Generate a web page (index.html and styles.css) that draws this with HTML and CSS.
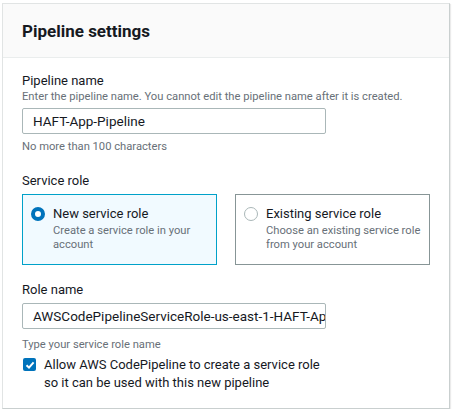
FILE: index.html
```html
<!DOCTYPE html>
<html>
<head>
<meta charset="utf-8">
<link rel="stylesheet" href="styles.css">
</head>
<body>
<div class="panel">
  <div class="panel-header"><h2 class="title">Pipeline settings</h2></div>
  <div class="panel-body">
    <div class="field">
      <div class="label">Pipeline name</div>
      <div class="desc">Enter the pipeline name. You cannot edit the pipeline name after it is created.</div>
      <div class="input">HAFT-App-Pipeline</div>
      <div class="hint">No more than 100 characters</div>
    </div>
    <div class="field service">
      <div class="label">Service role</div>
      <div class="tiles">
        <div class="tile selected">
          <span class="radio on"></span>
          <div class="tile-text">
            <div class="tile-title">New service role</div>
            <div class="tile-desc">Create a service role in your account</div>
          </div>
        </div>
        <div class="tile">
          <span class="radio"></span>
          <div class="tile-text">
            <div class="tile-title">Existing service role</div>
            <div class="tile-desc">Choose an existing service role from your account</div>
          </div>
        </div>
      </div>
    </div>
    <div class="field role">
      <div class="label">Role name</div>
      <div class="input clip">AWSCodePipelineServiceRole-us-east-1-HAFT-App-Pipeline</div>
      <div class="hint role-hint">Type your service role name</div>
      <div class="check-row">
        <span class="checkbox"><svg width="12" height="12" viewBox="0 0 12 12"><path d="M2.5 6.2 L5 8.6 L9.6 3.4" fill="none" stroke="#fff" stroke-width="2"/></svg></span>
        <span class="check-text">Allow AWS CodePipeline to create a service role so it can be used with this new pipeline</span>
      </div>
    </div>
  </div>
</div>
</body>
</html>
```
FILE: styles.css
```css
* { box-sizing: border-box; }
html, body { margin: 0; padding: 0; background: #fff; }
body {
  padding: 3px 2px 0 2px;
  font-family: Roboto, "Noto Sans", sans-serif;
  color: #16191f;
}
.panel {
  width: 448px;
  height: 406px;
  border: 1px solid #e1e4e4;
  border-right-color: #c9cfcf;
  border-bottom-color: #c9cfcf;
  box-shadow: 1px 1px 1px rgba(0,0,0,0.08);
  background: #fff;
}
.panel-header {
  height: 54px;
  background: #fafafa;
  border-bottom: 1px solid #eaeded;
  padding: 0 19px;
  display: flex;
  align-items: center;
}
.title {
  margin: 0;
  font-size: 17px;
  font-weight: 700;
}
.panel-body {
  padding: 14px 19px 0 19px;
}
.label {
  font-size: 13px;
  line-height: 18px;
}
.desc, .hint {
  font-size: 11.2px;
  line-height: 14px;
  color: #687078;
}
.input {
  width: 304px;
  height: 26px;
  border: 1px solid #aab7b8;
  border-radius: 2px;
  margin-top: 4px;
  padding: 0 10px;
  font-size: 13.5px;
  line-height: 24px;
  white-space: nowrap;
  overflow: hidden;
}
.hint { margin-top: 6px; }
.role-hint { margin-top: 9px; }
.service { margin-top: 18px; }
.tiles {
  display: flex;
  gap: 18px;
  margin-top: 4px;
}
.tile {
  width: 196px;
  height: 71px;
  border: 1px solid #879596;
  padding: 10px 4px 10px 8px;
  display: flex;
  gap: 8px;
}
.tile.selected {
  background: #f1faff;
  border-color: #00a1c9;
}
.radio {
  flex: none;
  width: 14px;
  height: 14px;
  border-radius: 50%;
  border: 1px solid #aab7b8;
  margin-top: 2px;
  background: #fff;
}
.radio.on {
  border: 4px solid #0073bb;
}
.tile-title {
  font-size: 13px;
  line-height: 18px;
}
.tile-desc {
  font-size: 11.2px;
  line-height: 14px;
  color: #687078;
  margin-top: 1px;
}
.role { margin-top: 16px; }
.check-row {
  display: flex;
  gap: 8px;
  margin-top: 4px;
}
.checkbox {
  flex: none;
  width: 13px;
  height: 13px;
  background: #0073bb;
  border-radius: 2px;
  margin-top: 2px;
  margin-left: 1px;
  display: flex;
  align-items: center;
  justify-content: center;
}
.check-text {
  font-size: 13px;
  line-height: 18px;
  width: 290px;
}
```
